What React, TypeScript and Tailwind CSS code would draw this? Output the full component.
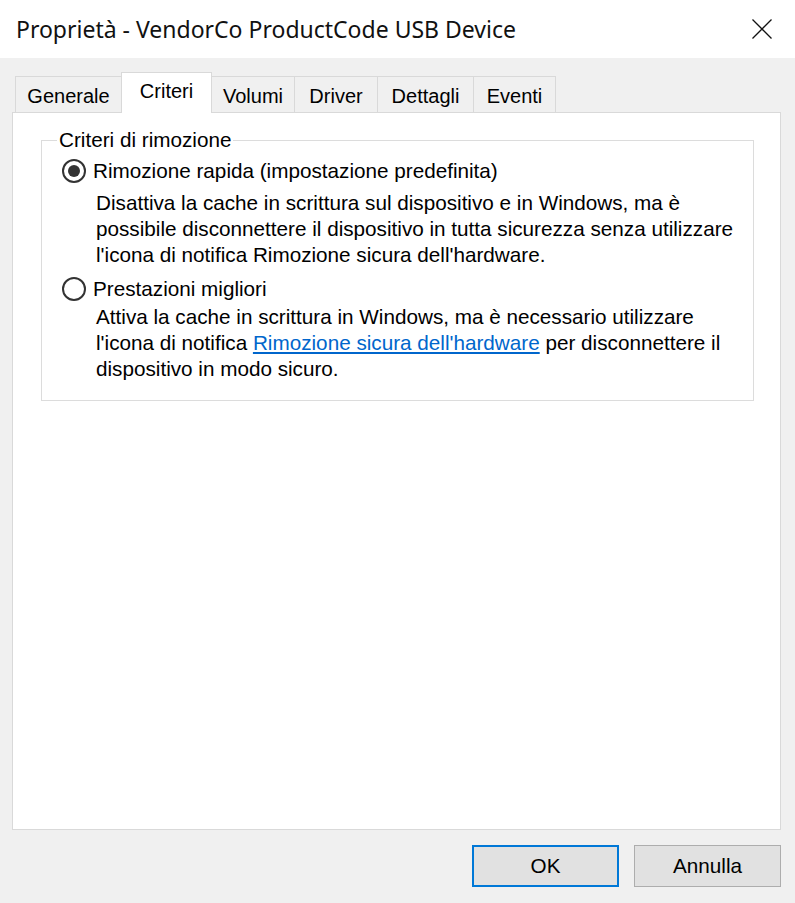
const TABS = [
  { label: "Generale", w: "w-[107px]" },
  { label: "Criteri", w: "w-[91px]", active: true },
  { label: "Volumi", w: "w-[84px]" },
  { label: "Driver", w: "w-[84px]" },
  { label: "Dettagli", w: "w-[97px]" },
  { label: "Eventi", w: "w-[83px]" },
];

function Radio({ checked }: { checked?: boolean }) {
  return (
    <span className="w-[24px] h-[24px] rounded-full border-2 border-[#333333] bg-white flex items-center justify-center shrink-0">
      {checked && <span className="w-[12px] h-[12px] rounded-full bg-[#333333]" />}
    </span>
  );
}

export default function App() {
  return (
    <div className="w-[795px] h-[903px] flex flex-col bg-[#f0f0f0] text-black font-['Liberation_Sans',Arial,sans-serif] text-[20.7px] leading-[26px]">
      {/* Title bar */}
      <div className="h-[58px] bg-white flex items-center justify-between pl-[16px] pr-[23px] shrink-0">
        <span className="font-['Noto_Sans',sans-serif] text-[23px] leading-none text-[#111] pt-[1px]">
          Proprietà - VendorCo ProductCode USB Device
        </span>
        <svg width="20" height="20" viewBox="0 0 20 20" className="text-[#111]">
          <path d="M0.5 0.5 L19.5 19.5 M19.5 0.5 L0.5 19.5" stroke="currentColor" strokeWidth="1.3" fill="none" />
        </svg>
      </div>

      <div className="flex-1 flex flex-col pl-[12px] pr-[14px] pt-[14px]">
        {/* Tabs */}
        <div className="flex items-end h-[40px] pl-[3px] relative z-10 text-[20px]">
          {TABS.map((t, i) =>
            t.active ? (
              <div
                key={t.label}
                className={`${t.w} h-[41px] -mb-px -ml-px bg-white border border-b-0 border-[#d9d9d9] flex justify-center pt-[5px]`}
              >
                {t.label}
              </div>
            ) : (
              <div
                key={t.label}
                className={`${t.w} h-[36px] ${i === 0 ? "" : "-ml-px"} bg-[#f0f0f0] border border-b-0 border-[#d9d9d9] flex justify-center pt-[6px]`}
              >
                {t.label}
              </div>
            )
          )}
        </div>

        {/* Panel */}
        <div className="h-[718px] bg-white border border-[#d9d9d9] pl-[28px] pr-[26px] pt-[14px]">
          <fieldset className="border border-[#dcdcdc] px-[20px] pb-[18px] whitespace-nowrap">
            <legend className="ml-[-5px] px-[2px]">Criteri di rimozione</legend>
            <div className="flex items-center gap-[7px] mt-[5px]">
              <Radio checked />
              <span>Rimozione rapida (impostazione predefinita)</span>
            </div>
            <p className="pl-[34px] mt-[6px]">
              Disattiva la cache in scrittura sul dispositivo e in Windows, ma è
              <br />
              possibile disconnettere il dispositivo in tutta sicurezza senza utilizzare
              <br />
              l'icona di notifica Rimozione sicura dell'hardware.
            </p>
            <div className="flex items-center gap-[7px] mt-[8px]">
              <Radio />
              <span>Prestazioni migliori</span>
            </div>
            <p className="pl-[34px] mt-[2px]">
              Attiva la cache in scrittura in Windows, ma è necessario utilizzare
              <br />
              l'icona di notifica{" "}
              <a className="text-[#0066cc] underline underline-offset-2">Rimozione sicura dell'hardware</a> per
              disconnettere il
              <br />
              dispositivo in modo sicuro.
            </p>
          </fieldset>
        </div>

        {/* Buttons */}
        <div className="flex justify-end gap-[15px] mt-[15px]">
          <button className="w-[147px] h-[42px] bg-[#e1e1e1] border-2 border-[#0078d7]">OK</button>
          <button className="w-[147px] h-[42px] bg-[#e1e1e1] border border-[#adadad]">Annulla</button>
        </div>
      </div>
    </div>
  );
}
